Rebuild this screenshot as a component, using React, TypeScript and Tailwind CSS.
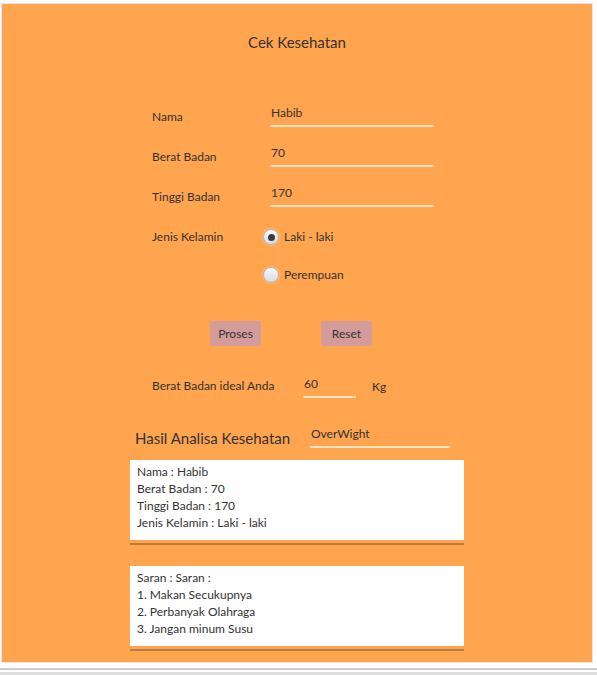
import React from 'react';

const Field: React.FC<{ label: string; value: string }> = ({ label, value }) => (
  <div className="flex h-[24px]">
    <div className="w-[118px] pt-[4px] leading-[20px]">{label}</div>
    <div className="w-[164px] h-[24px] border-b-2 border-[#fde2c2] leading-[20px] pl-[1px]">{value}</div>
  </div>
);

const Radio: React.FC<{ label: string; checked?: boolean }> = ({ label, checked }) => (
  <div className="flex h-[20px] items-center">
    <span className="w-[16px] h-[16px] rounded-full border border-[#b5b5b5] bg-gradient-to-b from-[#fbfbfb] to-[#dadada] shadow-[0_0_2px_rgba(255,255,255,0.7)] flex items-center justify-center">
      {checked && <span className="w-[7px] h-[7px] rounded-full bg-[#3c3c3c]" />}
    </span>
    <span className="ml-[5px] leading-[20px] -mt-[1px]">{label}</span>
  </div>
);

const InfoBox: React.FC<{ lines: string[] }> = ({ lines }) => (
  <div className="ml-[128px] w-[334px]">
    <div className="h-[80px] bg-white pl-[7px] pt-[3px] text-[12px] leading-[17px] text-[#333]">
      {lines.map((l) => (
        <div key={l}>{l}</div>
      ))}
    </div>
    <div className="mt-[3px] h-[2px] bg-[#bb7c3f]" />
  </div>
);

export default function App() {
  return (
    <div className="w-[597px] h-[675px] bg-white overflow-hidden font-['Lato',sans-serif] text-[12px] text-[#333]">
      <div className="ml-[1px] mt-[3px] w-[592px] h-[660px] bg-[#ffa44f] border border-[#e4e4e4]">
        <div className="mt-[28px] h-[20px] leading-[20px] text-[15px] text-center">Cek Kesehatan</div>

        <div className="mt-[51px] pl-[150px]">
          <Field label="Nama" value="Habib" />
          <div className="mt-[16px]">
            <Field label="Berat Badan" value="70" />
          </div>
          <div className="mt-[16px]">
            <Field label="Tinggi Badan" value="170" />
          </div>

          <div className="mt-[20px] flex">
            <div className="w-[111px] leading-[20px]">Jenis Kelamin</div>
            <Radio label="Laki - laki" checked />
          </div>
          <div className="mt-[18px] pl-[111px]">
            <Radio label="Perempuan" />
          </div>

          <div className="mt-[36px] ml-[58px] flex gap-[60px]">
            <button className="w-[51px] h-[25px] bg-[#d39c9a] rounded-[2px] leading-[25px] text-center">Proses</button>
            <button className="w-[51px] h-[25px] bg-[#d39c9a] rounded-[2px] leading-[25px] text-center">Reset</button>
          </div>

          <div className="mt-[28px] flex h-[24px]">
            <div className="w-[151px] pt-[2px] leading-[20px]">Berat Badan ideal Anda</div>
            <div className="w-[53px] h-[24px] border-b-2 border-[#fde2c2] leading-[20px] pl-[1px]">60</div>
            <div className="ml-[16px] pt-[3px] leading-[20px]">Kg</div>
          </div>
        </div>

        <div className="mt-[26px] ml-[133px] flex h-[24px]">
          <div className="w-[175px] pt-[4px] leading-[20px] text-[15px]">Hasil Analisa Kesehatan</div>
          <div className="w-[140px] h-[24px] border-b-2 border-[#fde2c2] leading-[20px] pl-[1px]">OverWight</div>
        </div>

        <div className="mt-[12px]">
          <InfoBox lines={['Nama : Habib', 'Berat Badan : 70', 'Tinggi Badan : 170', 'Jenis Kelamin : Laki - laki']} />
        </div>
        <div className="mt-[21px]">
          <InfoBox lines={['Saran : Saran :', '1. Makan Secukupnya', '2. Perbanyak Olahraga', '3. Jangan minum Susu']} />
        </div>
      </div>
      <div className="mt-[5px] h-[2px] bg-[#cdcdcd]" />
      <div className="mt-[2px] h-[3px] bg-[#dedede]" />
    </div>
  );
}
